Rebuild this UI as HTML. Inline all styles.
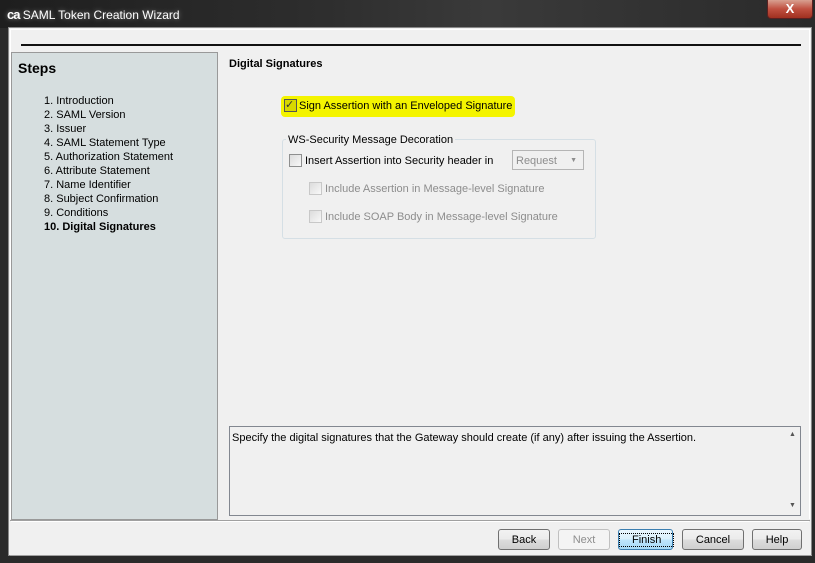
<!DOCTYPE html>
<html><head><meta charset="utf-8"><style>
*{margin:0;padding:0;box-sizing:border-box}
body{width:815px;height:563px;overflow:hidden;background:#2a2a2a;font-family:"Liberation Sans",sans-serif;font-size:11px;color:#000;position:relative}
.abs{position:absolute}
.title{left:0;top:0;width:815px;height:28px;background:linear-gradient(90deg,#1e1e1e 0%,#2e2e2e 40%,#3a3a3a 60%,#2a2a2a 100%)}
.ttext{left:7px;top:7px;color:#fff;font-size:12px;text-shadow:0 0 5px #888}
.close{left:767px;top:0;width:46px;height:19px;border:1px solid #5a2020;border-top:none;border-radius:0 0 4px 4px;background:linear-gradient(#d8a090,#c05040 50%,#a03020);color:#fff;font-weight:bold;font-size:13px;text-align:center;line-height:17px}
.content{left:8px;top:27px;width:804px;height:529px;background:#f0f0f0;border:1px solid #888}
.cb{width:13px;height:13px;border:1px solid #8e8f8f;background:linear-gradient(135deg,#dcdcdc,#f8f8f8)}
.dis{color:#8d8d8d}
.btn{top:529px;height:21px;border:1px solid #707070;border-radius:3px;background:linear-gradient(#f2f2f2,#ebebeb 50%,#dddddd 51%,#cfcfcf);text-align:center;line-height:20px;font-size:11px}
</style></head><body>
<div class="abs title"></div>
<div class="abs ttext"><b style="font-size:13px;letter-spacing:-1px">ca</b> SAML Token Creation Wizard</div>
<div class="abs close">X</div>
<div class="abs content"></div>
<div class="abs" style="left:10px;top:29px;width:800px;height:490px;border:1px solid #fff;border-bottom:none"></div>
<div class="abs" style="left:21px;top:44px;width:780px;height:2px;background:#111"></div>
<div class="abs" style="left:11px;top:52px;width:207px;height:468px;background:#d6dedf;border:1px solid #999"></div>
<div class="abs" style="left:18px;top:60px;font-size:14px;font-weight:bold">Steps</div>
<div class="abs" style="left:44px;top:94px;line-height:14px;font-size:11px">
1. Introduction<br>2. SAML Version<br>3. Issuer<br>4. SAML Statement Type<br>5. Authorization Statement<br>6. Attribute Statement<br>7. Name Identifier<br>8. Subject Confirmation<br>9. Conditions<br><b>10. Digital Signatures</b></div>
<div class="abs" style="left:229px;top:58px;font-weight:bold;font-size:11px">Digital Signatures</div>
<div class="abs" style="left:281px;top:96px;width:234px;height:21px;background:#f4f400;border-radius:4px"></div>
<div class="abs cb" style="left:284px;top:99px;background:#d8d800;border-color:#555"></div>
<div class="abs" style="left:285px;top:98px;font-size:11px;color:#333">✓</div>
<div class="abs" style="left:299px;top:100px">Sign Assertion with an Enveloped Signature</div>
<div class="abs" style="left:282px;top:139px;width:314px;height:100px;border:1px solid #d5dfe5;border-radius:3px"></div>
<div class="abs" style="left:286px;top:134px;background:#f0f0f0;padding:0 2px">WS-Security Message Decoration</div>
<div class="abs cb" style="left:289px;top:154px"></div>
<div class="abs" style="left:305px;top:155px">Insert Assertion into Security header in</div>
<div class="abs dis" style="left:512px;top:150px;width:72px;height:20px;border:1px solid #b5b5b5;padding:4px 0 0 3px">Request<span style="position:absolute;right:6px;top:6px;font-size:7px">▼</span></div>
<div class="abs cb" style="left:309px;top:182px;border-color:#c8c8c8"></div>
<div class="abs dis" style="left:325px;top:183px">Include Assertion in Message-level Signature</div>
<div class="abs cb" style="left:309px;top:210px;border-color:#c8c8c8"></div>
<div class="abs dis" style="left:325px;top:211px">Include SOAP Body in Message-level Signature</div>
<div class="abs" style="left:229px;top:426px;width:572px;height:90px;border:1px solid #828790"></div>
<div class="abs" style="left:232px;top:432px">Specify the digital signatures that the Gateway should create (if any) after issuing the Assertion.</div>
<div class="abs" style="left:786px;top:427px;width:14px;height:88px;background:#f0f0f0"></div>
<div class="abs" style="left:789px;top:431px;font-size:7px;color:#555">▲</div>
<div class="abs" style="left:789px;top:502px;font-size:7px;color:#555">▼</div>
<div class="abs" style="left:10px;top:520px;width:800px;height:1px;background:#a0a0a0"></div>
<div class="abs" style="left:11px;top:521px;width:798px;height:1px;background:#fff"></div>
<div class="abs" style="left:10px;top:555px;width:802px;height:1px;background:#a0a0a0"></div>
<div class="abs btn" style="left:498px;width:52px">Back</div>
<div class="abs btn" style="left:558px;width:52px;color:#8d8d8d;border-color:#c0c0c0;background:#f4f4f4">Next</div>
<div class="abs btn" style="left:618px;width:55px;border-color:#3c7fb1;background:linear-gradient(#eaf6fd,#d9f0fc 50%,#bee6fd 51%,#a7d9f5)"><span style="border:1px dotted #000;padding:0 12px">Finish</span></div>
<div class="abs btn" style="left:682px;width:62px">Cancel</div>
<div class="abs btn" style="left:752px;width:50px">Help</div>
</body></html>
